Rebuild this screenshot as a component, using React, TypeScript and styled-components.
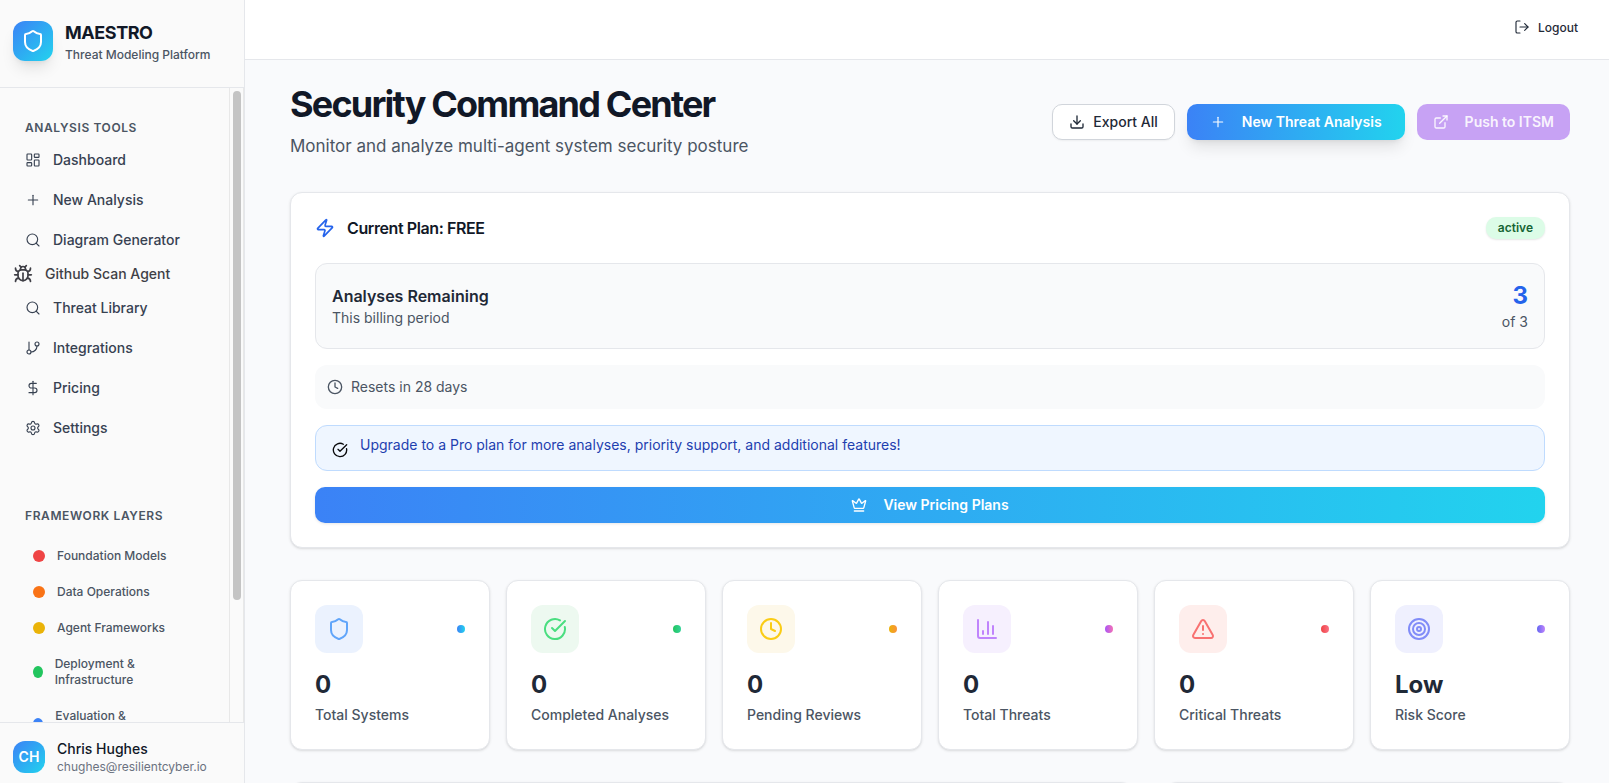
import React from "react";
import styled, { createGlobalStyle } from "styled-components";
import {
  Bug,
  ChartColumn,
  CircleCheckBig,
  Clock,
  Crown,
  DollarSign,
  Download,
  ExternalLink,
  GitBranch,
  LayoutDashboard,
  LogOut,
  Plus,
  Search,
  Settings,
  Shield,
  Target,
  TriangleAlert,
  Zap,
} from "lucide-react";
import type { LucideIcon } from "lucide-react";

const GlobalStyle = createGlobalStyle`
  *, *::before, *::after { box-sizing: border-box; }
  body {
    margin: 0;
    font-family: Inter, "Liberation Sans", sans-serif;
    font-size: 14px;
    line-height: 20px;
    color: #111827;
    background: #f9fafc;
    overflow: hidden;
  }
  h1, h2, h3, p, ul { margin: 0; padding: 0; }
  ul { list-style: none; }
  a { color: inherit; text-decoration: none; }
  button { font-family: inherit; cursor: pointer; }
  svg { flex-shrink: 0; display: block; }
`;

const Shell = styled.div`
  display: flex;
  height: 100vh;
`;

/* Sidebar */

const Sidebar = styled.aside`
  display: flex;
  flex-direction: column;
  flex: 0 0 245px;
  background: #fafafa;
  border-right: 1px solid #e5e7eb;
`;

const Brand = styled.header`
  display: flex;
  align-items: center;
  gap: 12px;
  padding: 19px 12px 24px 13px;
  border-bottom: 1px solid #e5e7eb;
`;

const BrandMark = styled.div`
  display: grid;
  place-items: center;
  width: 40px;
  height: 40px;
  border-radius: 12px;
  color: #fff;
  background: linear-gradient(to bottom right, #3b82f6, #22d3ee);
  box-shadow: 0 10px 15px -3px rgba(0, 0, 0, 0.1), 0 4px 6px -4px rgba(0, 0, 0, 0.1);
`;

const BrandName = styled.h2`
  font-size: 18px;
  line-height: 28px;
  font-weight: 700;
  letter-spacing: -0.025em;
`;

const BrandTagline = styled.p`
  font-size: 12px;
  line-height: 16px;
  font-weight: 500;
  color: #4b5563;
`;

const NavArea = styled.div`
  display: flex;
  flex: 1;
  min-height: 0;
`;

const Nav = styled.nav`
  flex: 1;
  min-width: 0;
  overflow: hidden;
  padding: 32px 16px 0 13px;
`;

const ScrollTrack = styled.div`
  width: 15px;
  padding: 3px;
  border: solid #e8e8e8;
  border-width: 0 1px;
`;

const ScrollThumb = styled.div`
  width: 8px;
  height: 81%;
  border-radius: 4px;
  background: #c4c4c4;
`;

const NavHeading = styled.h3`
  padding-left: 12px;
  font-size: 12px;
  line-height: 16px;
  font-weight: 600;
  letter-spacing: 0.05em;
  text-transform: uppercase;
  color: #4b5563;
`;

const ToolList = styled.ul`
  display: flex;
  flex-direction: column;
  gap: 4px;
  margin: 6px 0 62px;
`;

const ToolLink = styled.a<{ $compact?: boolean }>`
  display: flex;
  align-items: center;
  gap: 12px;
  height: ${(p) => (p.$compact ? 24 : 36)}px;
  padding: 0 ${(p) => (p.$compact ? 0 : 12)}px;
  font-weight: 500;
  color: ${(p) => (p.$compact ? "#3f3f46" : "#374151")};
`;

const LayerList = styled.ul`
  display: flex;
  flex-direction: column;
  gap: 4px;
  margin-top: 16px;
`;

const Layer = styled.li`
  display: flex;
  align-items: center;
  gap: 12px;
  margin: 0 20px 0 12px;
  padding: 8px;
  font-size: 12px;
  line-height: 16px;
  font-weight: 500;
  color: #4b5563;
`;

const LayerDot = styled.span<{ $color: string }>`
  width: 12px;
  height: 12px;
  border-radius: 50%;
  background: ${(p) => p.$color};
`;

const UserPanel = styled.footer`
  display: flex;
  align-items: center;
  gap: 12px;
  padding: 16px 12px 8px 13px;
  border-top: 1px solid #e5e7eb;
`;

const Avatar = styled.div`
  display: grid;
  place-items: center;
  width: 32px;
  height: 32px;
  border-radius: 12px;
  font-weight: 600;
  color: #fff;
  background: linear-gradient(to bottom right, #3b82f6, #22d3ee);
`;

const UserName = styled.p`
  font-weight: 500;
`;

const UserEmail = styled.p`
  font-size: 12px;
  line-height: 16px;
  color: #6b7280;
`;

/* Main column */

const Main = styled.div`
  display: flex;
  flex-direction: column;
  flex: 1;
  min-width: 0;
`;

const TopBar = styled.header`
  display: flex;
  justify-content: flex-end;
  align-items: flex-start;
  height: 60px;
  flex-shrink: 0;
  padding: 9px 19px;
  background: #fff;
  border-bottom: 1px solid #e5e7eb;
`;

const LogoutButton = styled.button`
  display: flex;
  align-items: center;
  gap: 8px;
  height: 36px;
  padding: 0 12px;
  border: 0;
  background: none;
  font-size: 12px;
  font-weight: 500;
  color: #1f2937;
`;

const Content = styled.main`
  display: flex;
  flex-direction: column;
  flex: 1;
  min-height: 0;
  gap: 32px;
  overflow: hidden;
  padding: 24px 39px 0 45px;

  > * { flex-shrink: 0; }
`;

const PageHeader = styled.div`
  display: flex;
  align-items: center;
  justify-content: space-between;
`;

const PageTitle = styled.h1`
  font-size: 36px;
  line-height: 40px;
  font-weight: 700;
  letter-spacing: -0.05em;
`;

const PageSubtitle = styled.p`
  margin-top: 8px;
  font-size: 17px;
  line-height: 28px;
  color: #4b5563;
`;

const Actions = styled.div`
  display: flex;
  gap: 12px;
`;

const Button = styled.button`
  display: flex;
  align-items: center;
  justify-content: center;
  gap: 16px;
  height: 36px;
  padding: 0 16px;
  border: 0;
  border-radius: 10px;
  font-size: 14px;
  line-height: 20px;
  font-weight: 600;
  color: #fff;
`;

const OutlineButton = styled(Button)`
  gap: 8px;
  border: 1px solid #d1d5db;
  background: #fff;
  font-weight: 500;
  color: #1f2937;
  box-shadow: 0 1px 2px rgba(0, 0, 0, 0.05);
`;

const GradientButton = styled(Button)<{ $raised?: boolean }>`
  padding: 0 23px;
  background: linear-gradient(to right, #3b82f6, #22d3ee);
  box-shadow: ${(p) =>
    p.$raised
      ? "0 10px 15px -3px rgba(0, 0, 0, 0.1), 0 4px 6px -4px rgba(0, 0, 0, 0.1)"
      : "0 1px 3px rgba(0, 0, 0, 0.1)"};
`;

const ItsmButton = styled(Button)`
  background: #c7a2f4;
  color: rgba(255, 255, 255, 0.9);
  cursor: default;
`;

const Card = styled.section`
  padding: 24px;
  border: 1px solid #e5e7eb;
  border-radius: 12px;
  background: #fff;
  box-shadow: 0 1px 3px rgba(0, 0, 0, 0.1), 0 1px 2px -1px rgba(0, 0, 0, 0.1);
`;

const PlanCard = styled(Card)`
  display: flex;
  flex-direction: column;
  gap: 16px;
`;

const PlanHeader = styled.div`
  display: flex;
  align-items: center;
  justify-content: space-between;
  margin-bottom: 8px;
`;

const PlanTitle = styled.h2`
  display: flex;
  align-items: center;
  gap: 12px;
  font-size: 16px;
  line-height: 22px;
  font-weight: 600;
  letter-spacing: -0.025em;

  svg { color: #2563eb; }
`;

const StatusBadge = styled.span`
  padding: 3px 12px;
  border-radius: 10px;
  background: #dcfce7;
  font-size: 12px;
  line-height: 16px;
  font-weight: 600;
  color: #166534;
  box-shadow: 0 1px 2px rgba(0, 0, 0, 0.1);
`;

const UsageBox = styled.div`
  display: flex;
  align-items: center;
  justify-content: space-between;
  padding: 16px;
  border: 1px solid #e5e7eb;
  border-radius: 12px;
  background: #f9fafb;
`;

const UsageTitle = styled.h3`
  font-size: 16px;
  line-height: 24px;
  font-weight: 600;
  color: #1f2937;
`;

const Muted = styled.p`
  color: #4b5563;
`;

const UsageCount = styled.div`
  text-align: right;
`;

const UsageValue = styled.p`
  font-size: 24px;
  line-height: 32px;
  font-weight: 700;
  color: #2563eb;
`;

const ResetNote = styled.div`
  display: flex;
  align-items: center;
  gap: 8px;
  padding: 12px;
  border-radius: 12px;
  background: #f9fafb;
  color: #4b5563;
`;

const UpgradeAlert = styled.div`
  display: flex;
  align-items: flex-start;
  gap: 12px;
  padding: 9px 16px 12px;
  border: 1px solid #bfdbfe;
  border-radius: 12px;
  background: #eff6ff;
  color: #1e40af;

  svg {
    margin-top: 7px;
    color: #09090b;
  }
`;

const StatGrid = styled.section`
  display: grid;
  grid-template-columns: repeat(6, 1fr);
  gap: 16px;
`;

const StatTop = styled.div`
  display: flex;
  align-items: center;
  justify-content: space-between;
  margin-bottom: 16px;
`;

const StatIcon = styled.div<{ $color: string; $tint: string }>`
  display: grid;
  place-items: center;
  width: 48px;
  height: 48px;
  border-radius: 12px;
  color: ${(p) => p.$color};
  background: ${(p) => p.$tint};
`;

const StatDot = styled.span<{ $from: string; $to: string }>`
  width: 8px;
  height: 8px;
  border-radius: 50%;
  background: linear-gradient(to right, ${(p) => p.$from}, ${(p) => p.$to});
`;

const StatValue = styled.p`
  font-size: 24px;
  line-height: 32px;
  font-weight: 700;
  color: #1f2937;
`;

const StatLabel = styled.p`
  margin-top: 4px;
  font-weight: 500;
  color: #4b5563;
`;

const LowerGrid = styled.div`
  display: grid;
  grid-template-columns: repeat(3, 1fr);
  gap: 32px;
`;

const LowerCard = styled(Card)<{ $span?: number }>`
  grid-column: span ${(p) => p.$span ?? 1};
  min-height: 240px;
`;

interface Tool {
  label: string;
  icon: LucideIcon;
  compact?: boolean;
}

const tools: Tool[] = [
  { label: "Dashboard", icon: LayoutDashboard },
  { label: "New Analysis", icon: Plus },
  { label: "Diagram Generator", icon: Search },
  { label: "Github Scan Agent", icon: Bug, compact: true },
  { label: "Threat Library", icon: Search },
  { label: "Integrations", icon: GitBranch },
  { label: "Pricing", icon: DollarSign },
  { label: "Settings", icon: Settings },
];

const layers = [
  { label: "Foundation Models", color: "#ef4444" },
  { label: "Data Operations", color: "#f97316" },
  { label: "Agent Frameworks", color: "#eab308" },
  { label: "Deployment & Infrastructure", color: "#22c55e" },
  { label: "Evaluation & Observability", color: "#3b82f6" },
];

const stats = [
  { label: "Total Systems", value: "0", icon: Shield, color: "#60a5fa", tint: "#ebf2fe", from: "#3b82f6", to: "#22d3ee" },
  { label: "Completed Analyses", value: "0", icon: CircleCheckBig, color: "#4ade80", tint: "#edf9f0", from: "#22c55e", to: "#34d399" },
  { label: "Pending Reviews", value: "0", icon: Clock, color: "#facc15", tint: "#fdf8ea", from: "#eab308", to: "#fb923c" },
  { label: "Total Threats", value: "0", icon: ChartColumn, color: "#c084fc", tint: "#f6f0fe", from: "#a855f7", to: "#f472b6" },
  { label: "Critical Threats", value: "0", icon: TriangleAlert, color: "#f87171", tint: "#feeeec", from: "#ef4444", to: "#fb7185" },
  { label: "Risk Score", value: "Low", icon: Target, color: "#818cf8", tint: "#eff0fe", from: "#6366f1", to: "#c084fc" },
];

export default function App() {
  return (
    <>
      <GlobalStyle />
      <Shell>
        <Sidebar>
          <Brand>
            <BrandMark>
              <Shield size={24} />
            </BrandMark>
            <div>
              <BrandName>MAESTRO</BrandName>
              <BrandTagline>Threat Modeling Platform</BrandTagline>
            </div>
          </Brand>
          <NavArea>
            <Nav>
              <NavHeading>Analysis Tools</NavHeading>
              <ToolList>
                {tools.map(({ label, icon: Icon, compact }) => (
                  <li key={label}>
                    <ToolLink href="#" $compact={compact}>
                      <Icon size={compact ? 20 : 16} strokeWidth={compact ? 2 : 1.7} />
                      {label}
                    </ToolLink>
                  </li>
                ))}
              </ToolList>
              <NavHeading>Framework Layers</NavHeading>
              <LayerList>
                {layers.map((layer) => (
                  <Layer key={layer.label}>
                    <LayerDot $color={layer.color} />
                    <span>{layer.label}</span>
                  </Layer>
                ))}
              </LayerList>
            </Nav>
            <ScrollTrack aria-hidden="true">
              <ScrollThumb />
            </ScrollTrack>
          </NavArea>
          <UserPanel>
            <Avatar>CH</Avatar>
            <div>
              <UserName>Chris Hughes</UserName>
              <UserEmail>chughes@resilientcyber.io</UserEmail>
            </div>
          </UserPanel>
        </Sidebar>

        <Main>
          <TopBar>
            <LogoutButton type="button">
              <LogOut size={16} strokeWidth={1.7} />
              Logout
            </LogoutButton>
          </TopBar>
          <Content>
            <PageHeader>
              <div>
                <PageTitle>Security Command Center</PageTitle>
                <PageSubtitle>Monitor and analyze multi-agent system security posture</PageSubtitle>
              </div>
              <Actions>
                <OutlineButton type="button">
                  <Download size={16} />
                  Export All
                </OutlineButton>
                <GradientButton type="button" $raised>
                  <Plus size={16} strokeWidth={1.7} />
                  New Threat Analysis
                </GradientButton>
                <ItsmButton type="button" disabled>
                  <ExternalLink size={16} />
                  Push to ITSM
                </ItsmButton>
              </Actions>
            </PageHeader>

            <PlanCard>
              <PlanHeader>
                <PlanTitle>
                  <Zap size={20} />
                  Current Plan: FREE
                </PlanTitle>
                <StatusBadge>active</StatusBadge>
              </PlanHeader>
              <UsageBox>
                <div>
                  <UsageTitle>Analyses Remaining</UsageTitle>
                  <Muted>This billing period</Muted>
                </div>
                <UsageCount>
                  <UsageValue>3</UsageValue>
                  <Muted>of 3</Muted>
                </UsageCount>
              </UsageBox>
              <ResetNote>
                <Clock size={16} />
                <span>Resets in 28 days</span>
              </ResetNote>
              <UpgradeAlert>
                <CircleCheckBig size={16} />
                <p>Upgrade to a Pro plan for more analyses, priority support, and additional features!</p>
              </UpgradeAlert>
              <GradientButton type="button">
                <Crown size={16} />
                View Pricing Plans
              </GradientButton>
            </PlanCard>

            <StatGrid>
              {stats.map(({ label, value, icon: Icon, color, tint, from, to }) => (
                <Card key={label}>
                  <StatTop>
                    <StatIcon $color={color} $tint={tint}>
                      <Icon size={24} />
                    </StatIcon>
                    <StatDot $from={from} $to={to} />
                  </StatTop>
                  <StatValue>{value}</StatValue>
                  <StatLabel>{label}</StatLabel>
                </Card>
              ))}
            </StatGrid>

            <LowerGrid>
              <LowerCard $span={2} />
              <LowerCard />
            </LowerGrid>
          </Content>
        </Main>
      </Shell>
    </>
  );
}
